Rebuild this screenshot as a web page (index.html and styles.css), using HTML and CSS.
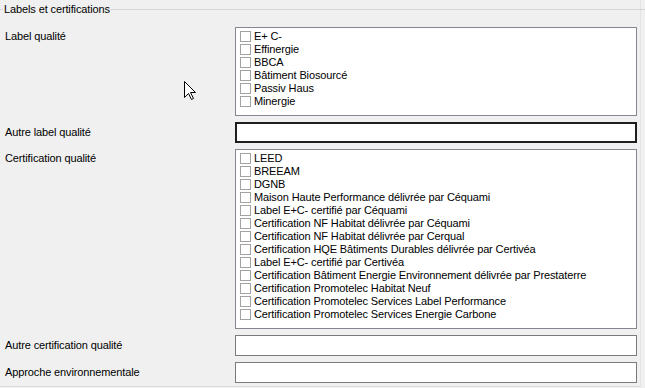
FILE: index.html
```html
<!DOCTYPE html>
<html lang="fr">
<head>
    <meta charset="UTF-8">
    <title>Labels et certifications</title>
    <link rel="stylesheet" href="styles.css">
</head>
<body>

    <div class="group">
        <div class="group-title">
            <span class="line-start"></span>
            <span class="title-text">Labels et certifications</span>
            <span class="line-end"></span>
        </div>

        <div class="form">
            <div class="label top">Label qualité</div>
            <div class="checklist short">
                <label class="item"><span class="box"></span>E+ C-</label>
                <label class="item"><span class="box"></span>Effinergie</label>
                <label class="item"><span class="box"></span>BBCA</label>
                <label class="item"><span class="box"></span>Bâtiment Biosourcé</label>
                <label class="item"><span class="box"></span>Passiv Haus</label>
                <label class="item"><span class="box"></span>Minergie</label>
            </div>

            <div class="label">Autre label qualité</div>
            <div class="textbox focused"></div>

            <div class="label top">Certification qualité</div>
            <div class="checklist long">
                <label class="item"><span class="box"></span>LEED</label>
                <label class="item"><span class="box"></span>BREEAM</label>
                <label class="item"><span class="box"></span>DGNB</label>
                <label class="item"><span class="box"></span>Maison Haute Performance délivrée par Céquami</label>
                <label class="item"><span class="box"></span>Label E+C- certifié par Céquami</label>
                <label class="item"><span class="box"></span>Certification NF Habitat délivrée par Céquami</label>
                <label class="item"><span class="box"></span>Certification NF Habitat délivrée par Cerqual</label>
                <label class="item"><span class="box"></span>Certification HQE Bâtiments Durables délivrée par Certivéa</label>
                <label class="item"><span class="box"></span>Label E+C- certifié par Certivéa</label>
                <label class="item"><span class="box"></span>Certification Bâtiment Energie Environnement délivrée par Prestaterre</label>
                <label class="item"><span class="box"></span>Certification Promotelec Habitat Neuf</label>
                <label class="item"><span class="box"></span>Certification Promotelec Services Label Performance</label>
                <label class="item"><span class="box"></span>Certification Promotelec Services Energie Carbone</label>
            </div>

            <div class="label">Autre certification qualité</div>
            <div class="textbox"></div>

            <div class="label">Approche environnementale</div>
            <div class="textbox"></div>
        </div>
    </div>

    <!-- mouse pointer left over the form -->
    <svg class="cursor" width="13" height="20" viewBox="0 0 13 20">
        <path d="M0.5 0.5 L0.5 16.5 L4.5 12.5 L7.5 18.5 L9.5 17.5 L6.5 11.5 L11.5 11.5 Z" fill="#fff" stroke="#000" stroke-width="1"/>
    </svg>

</body>
</html>
```

FILE: styles.css
```css
body {
    margin: 0;
    padding: 0;
    background: #f0f0f0;
    font-family: "Liberation Sans", Arial, sans-serif;
    font-size: 11px;
    letter-spacing: -0.12px;
    color: #000;
    width: 645px;
    height: 388px;
    overflow: hidden;
    position: relative;
}

.group {
    width: 640px;
    height: 386px;
    border-right: 1px solid #e4e4e4;
    border-bottom: 1px solid #dcdcdc;
}

.group-title {
    display: flex;
    align-items: center;
    height: 18px;
    margin-bottom: 9px;
}

.line-start {
    width: 3px;
    border-top: 1px solid #d5d5d5;
}

.title-text {
    padding: 0 1px;
    line-height: 18px;
}

.line-end {
    flex: 1;
    border-top: 1px solid #d5d5d5;
    margin-right: -6px;
}

.form {
    display: grid;
    grid-template-columns: 235px 402px;
    row-gap: 6px;
}

.label {
    padding-left: 5px;
    align-self: center;
    line-height: 13px;
}

.label.top {
    align-self: start;
    padding-top: 3px;
}

.checklist {
    background: #fff;
    border: 1px solid #828790;
    padding: 2px 3px;
    box-sizing: border-box;
}

.checklist.short {
    height: 89px;
}

.checklist.long {
    height: 180px;
}

.item {
    display: flex;
    align-items: center;
    height: 13px;
    line-height: 13px;
    white-space: nowrap;
}

.box {
    width: 9px;
    height: 9px;
    border: 1px solid #a3a3a3;
    background: #fff;
    margin: 0 3px 0 1px;
    flex-shrink: 0;
}

.textbox {
    height: 21px;
    background: #fff;
    border: 1px solid #7a7a7a;
    box-sizing: border-box;
}

.textbox.focused {
    border: 2px solid #1e1e1e;
}

.cursor {
    position: absolute;
    left: 184px;
    top: 81px;
}
```
